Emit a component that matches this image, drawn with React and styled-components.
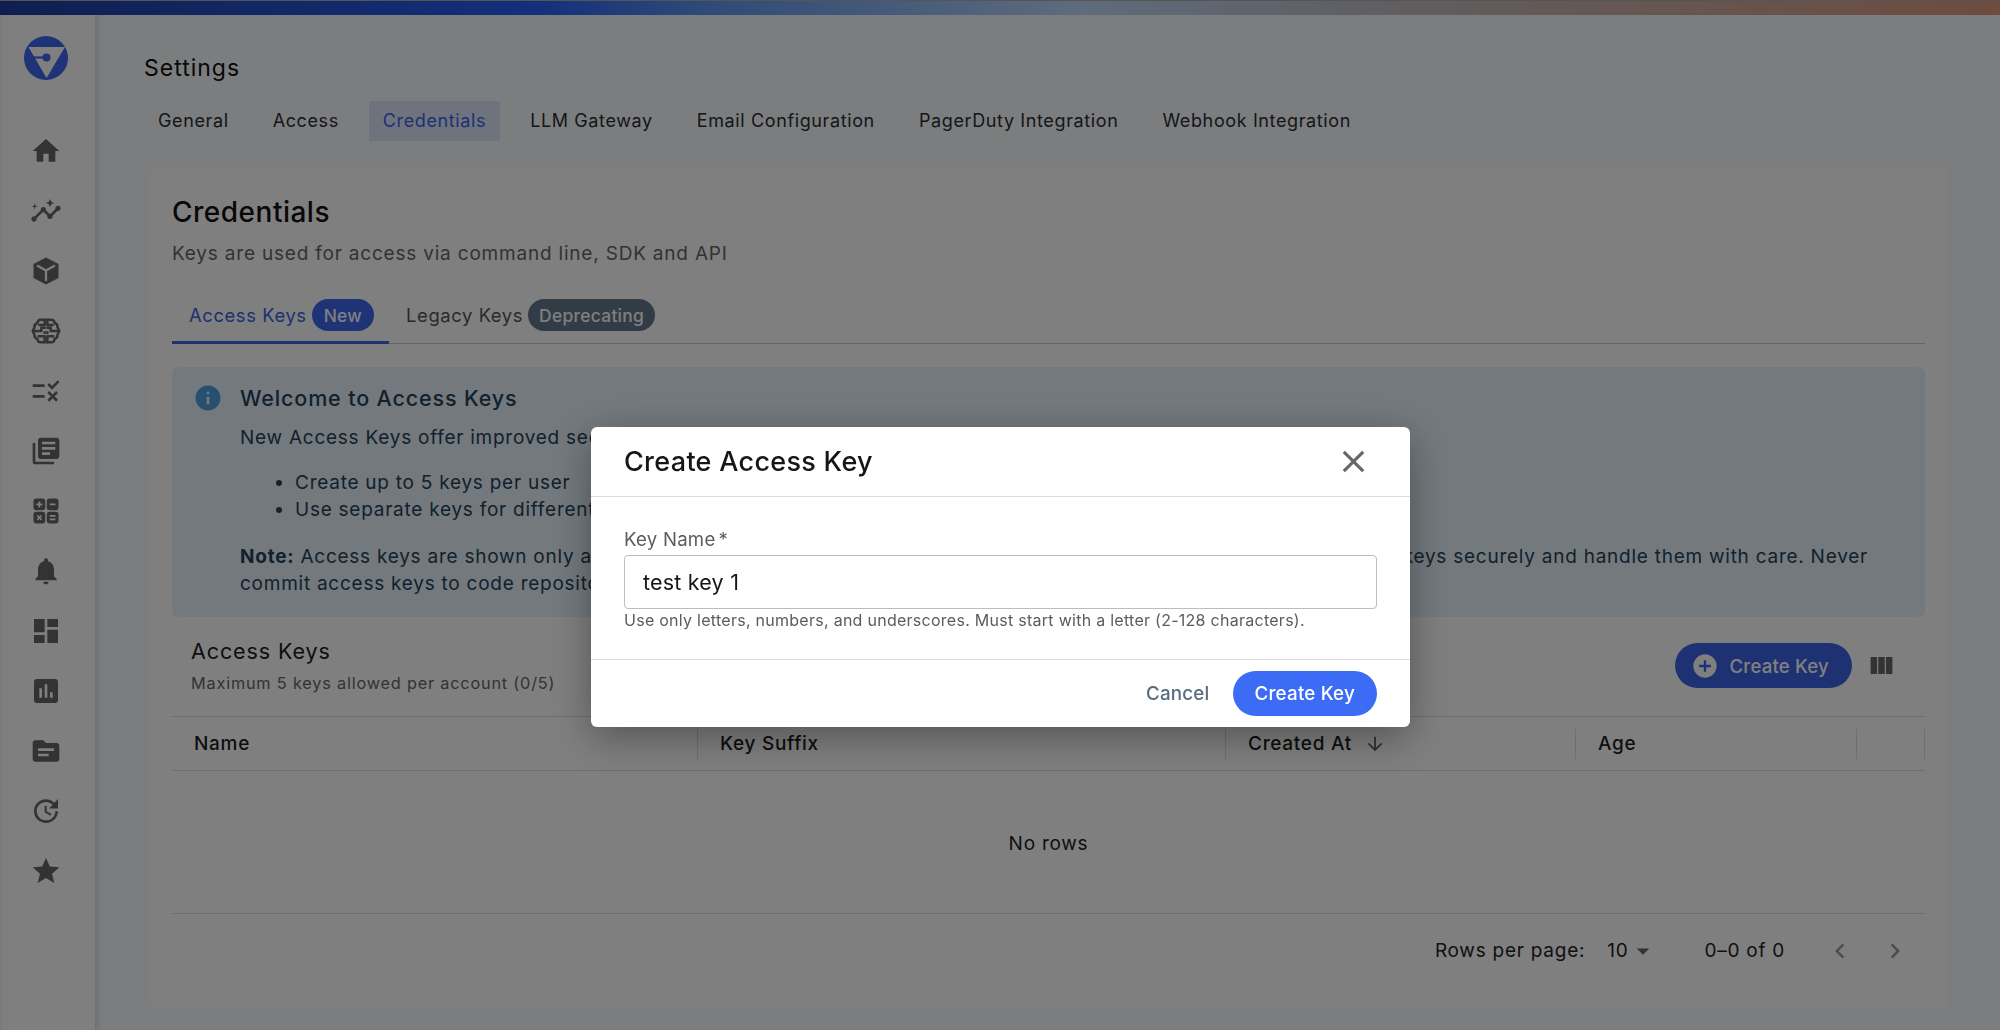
import React from "react";
import styled, { createGlobalStyle } from "styled-components";
import {
  MdHome, MdInsights, MdRule, MdLibraryBooks, MdNotifications, MdDashboard,
  MdAssessment, MdTopic, MdUpdate, MdStar, MdClose, MdInfo, MdViewColumn, MdAddCircle,
  MdArrowDropDown, MdChevronLeft, MdChevronRight, MdArrowDownward,
} from "react-icons/md";

const Global = createGlobalStyle`
  html, body { margin: 0; padding: 0; width: 2000px; height: 1030px; overflow: hidden; background: #fff; }
  * { box-sizing: border-box; }
  body { font-family: Inter, "Liberation Sans", sans-serif; color: #1a1a1a; letter-spacing: 0.5px; }
`;

const Page = styled.div`
  width: 2000px; height: 1030px; display: flex; flex-direction: column; background: #f8fafc;
`;
const TopBar = styled.div`
  height: 15px; flex: none; border-top: 1px solid #aaa;
  background: linear-gradient(90deg, #1e3ea0 0%, #2860f8 27%, #5c94f0 35%, #bcd8f8 54%, #c0bcc0 70%, #dc987c 100%);
`;
const Body = styled.div`display: flex; flex: 1; min-height: 0;`;
const Sidebar = styled.nav`
  width: 96px; flex: none; background: #fff; display: flex; flex-direction: column; align-items: center;
  padding: 21px 6px 0 0; border-right: 1px solid #e2e2e2; box-shadow: 2px 0 5px rgba(0,0,0,0.12); border-left: 2px solid #f4f4f4;
`;
const LogoWrap = styled.div`height: 85px; flex: none; width: 44px;`;
const NavItem = styled.div`
  height: 60px; flex: none; display: flex; align-items: center; justify-content: center; color: #666;
  font-size: 32px;
  svg { display: block; }
`;
const Main = styled.main`flex: 1; min-width: 0; padding: 0 50px 0 48px;`;
const PageTitle = styled.h1`
  margin: 0; font-size: 23px; font-weight: 400; line-height: 28px; padding-top: 39px; color: #111; letter-spacing: 1px;
`;
const NavTabs = styled.div`display: flex; gap: 16px; margin-top: 19px;`;
const NavTab = styled.div`
  height: 40px; padding: 0 14px 2px; display: flex; align-items: center; font-size: 18px; letter-spacing: 0.62px;
  color: ${p => (p.$active ? "#3d63e6" : "#2a2e33")};
  background: ${p => (p.$active ? "#dfe6fa" : "transparent")}; border-radius: 2px;
`;
const Card = styled.section`
  margin-top: 26px; margin-left: 6px; width: 1797px; height: 842px; background: #fff; border-radius: 8px; padding: 23px 22px 22px;
`;
const CardTitle = styled.h2`margin: 0; font-size: 28px; line-height: 44px; font-weight: 500; color: #111;`;
const CardSub = styled.p`margin: 6px 0 0; font-size: 19px; line-height: 28px; color: #666; letter-spacing: 0.8px;`;
const SubTabs = styled.div`
  display: flex; margin-top: 21px; height: 55px; border-bottom: 1px solid #ccc;
`;
const SubTab = styled.div`
  height: 55px; display: flex; align-items: center; gap: 5px; padding: 0 15px 0 17px; font-size: 18.4px; letter-spacing: 0.6px;
  color: ${p => (p.$active ? "#3d63e6" : "#555")};
  border-bottom: ${p => (p.$active ? "3px solid #3d63e6" : "none")};
  padding-bottom: ${p => (p.$active ? "0" : "3px")};
`;
const Badge = styled.span`
  height: 32px; border-radius: 16px; font-size: 17.4px; font-weight: 500; display: flex; align-items: center;
  color: #fff; background: ${p => (p.$grey ? "#64798c" : "#3f66ee")}; letter-spacing: 0.3px;
  padding: 0 ${p => (p.$grey ? "11px" : "12px")};
`;
const Alert = styled.div`
  margin-top: 23px; height: 250px; background: #e6f3fb; border-radius: 6px; padding: 18px 24px;
  display: flex; gap: 17px; color: #24425a;
`;
const InfoIcon = styled.div`flex: none; font-size: 30px; line-height: 0; color: #4fa0e0; margin-left: -3px; margin-top: -2px;`;
const AlertBody = styled.div`flex: 1; font-size: 19px; line-height: 27px; letter-spacing: 0.75px;`;
const AlertTitle = styled.div`font-size: 21.5px; line-height: 26px; font-weight: 500; margin-bottom: 13px; letter-spacing: 0.85px;`;
const AlertList = styled.ul`margin: 18px 0 20px; padding-left: 55px;`;
const SectionHead = styled.div`
  height: 100px; display: flex; align-items: center; justify-content: space-between; padding: 0 29px 2px 19px; border-bottom: 1px solid #ddd;
`;
const SectionTitle = styled.div`font-size: 21.5px; line-height: 28px; color: #1c1c1c; letter-spacing: 0.9px;`;
const SectionSub = styled.div`font-size: 16.3px; line-height: 24px; margin-top: 6px; color: #666; letter-spacing: 0.8px;`;
const SectionActions = styled.div`display: flex; align-items: center; gap: 15px;`;
const CreateButton = styled.div`
  height: 45px; padding: 0 23px 0 16px; border-radius: 23px; display: flex; align-items: center; gap: 11px; font-size: 18.6px;
  background: #3d63e6; color: #fff; font-weight: 500; letter-spacing: 0.2px;
`;
const ColumnsIcon = styled.div`font-size: 29px; line-height: 0; color: #666;`;
const HeadRow = styled.div`
  display: grid; grid-template-columns: 526px 528px 350px 281px 68px; height: 54px; border-bottom: 1px solid #ddd; align-items: center;
`;
const HeadCell = styled.div`
  height: 30px; display: flex; align-items: center; gap: 12px; padding-left: 22px; font-size: 19px; font-weight: 500; color: #1c1c1c;
  border-right: 1px solid #ddd; letter-spacing: 0.7px;
`;
const Empty = styled.div`
  height: 143px; display: flex; align-items: center; justify-content: center; padding-top: 3px; font-size: 19px; color: #1c1c1c; border-bottom: 1px solid #ddd;
  letter-spacing: 0.75px;
`;
const Pager = styled.div`
  height: 73px; display: flex; align-items: center; justify-content: flex-end; padding-right: 15px; font-size: 19px; color: #222; letter-spacing: 0.75px;
`;
const PageSize = styled.div`display: flex; align-items: center; margin-left: 22px; margin-right: 46px; svg { font-size: 30px; color: #666; }`;
const PagerArrow = styled.div`
  font-size: 30px; line-height: 0; color: #9a9a9a; margin-left: ${p => p.$gap}px;
`;
const Backdrop = styled.div`
  position: fixed; inset: 0; background: rgba(0,0,0,0.5);
`;
const Modal = styled.div`
  position: fixed; left: 591px; top: 427px; width: 819px; height: 300px; background: #fff; border-radius: 6px;
  box-shadow: 0 10px 40px rgba(0,0,0,0.35); display: flex; flex-direction: column;
`;
const ModalHead = styled.div`
  height: 70px; flex: none; border-bottom: 1px solid #dcdcdc; display: flex; align-items: center; justify-content: space-between; padding: 0 38px 0 33px;
`;
const ModalTitle = styled.div`font-size: 27px; font-weight: 500; color: #161616; letter-spacing: 0.3px;`;
const CloseBtn = styled.div`font-size: 37px; line-height: 0; color: #666;`;
const ModalBody = styled.div`flex: 1; padding: 30px 33px 0; border-bottom: 1px solid #dcdcdc;`;
const FieldLabel = styled.div`font-size: 18.6px; line-height: 24px; color: #5c5c5c; letter-spacing: 0.25px;`;
const Required = styled.span`margin-left: 3px;`;
const Input = styled.div`
  margin-top: 4px; height: 54px; border: 1px solid #bdbdbd; border-radius: 4px; display: flex; align-items: center; padding: 0 18px; font-size: 21.5px; color: #161616; letter-spacing: 0.2px;
`;
const Helper = styled.div`font-size: 16px; line-height: 20px; margin-top: 1px; color: #5c5c5c; letter-spacing: 0.27px;`;
const ModalFoot = styled.div`height: 67px; flex: none; display: flex; align-items: center; justify-content: flex-end; padding: 0 33px; gap: 23px;`;
const CancelBtn = styled.div`font-size: 18.8px; font-weight: 500; color: #5a6b80; letter-spacing: 0.2px;`;
const SubmitBtn = styled.div`
  height: 45px; padding: 0 22px; border-radius: 23px; background: #3c6cf5; color: #fff; display: flex; align-items: center; font-size: 18.8px; font-weight: 500; letter-spacing: 0.2px;
`;

const Logo = () => (
  <svg width="44" height="44" viewBox="0 0 44 44">
    <circle cx="22" cy="22" r="22" fill="#3f66ee" />
    <path d="M4.5 11 H41 L22.5 42 Z" fill="#fff" />
    <path d="M10 21.5 H21" stroke="#3f66ee" strokeWidth="2.2" fill="none" />
    <circle cx="22.5" cy="21.5" r="4" fill="#3f66ee" />
  </svg>
);
const CubeIcon = () => (
  <svg width="30" height="30" viewBox="0 0 30 30">
    <path d="M15 1.5 L27.5 8 V22 L15 28.5 L2.5 22 V8 Z" fill="currentColor" />
    <path d="M6 9.5 L15 14.5 L24 9.5 M15 14.5 V25" stroke="#fff" strokeWidth="2.2" fill="none" />
  </svg>
);
const BrainIcon = () => (
  <svg width="32" height="32" viewBox="0 0 24 24" fill="none" stroke="currentColor" strokeWidth="1.9" strokeLinejoin="round" strokeLinecap="round">
    <path d="M11 3.5 H8 Q5.8 3.5 5.6 6 Q3 6.8 3.4 9.2 L2 12 L3.4 14.8 Q3 17.2 5.6 18 Q5.8 20.5 8 20.5 H11" />
    <path d="M13 3.5 H16 Q18.2 3.5 18.4 6 Q21 6.8 20.6 9.2 L22 12 L20.6 14.8 Q21 17.2 18.4 18 Q18.2 20.5 16 20.5 H13" />
    <path d="M11 3.5 V7.5 H7 M3 12 H8.5 V9.5 H11 M6.5 16 H11 V20.5" />
    <path d="M13 3.5 V7.5 H17 M21 12 H15.5 V9.5 H13 M17.5 16 H13 V20.5" />
    <path d="M11 13 V13.5 M13 13 V13.5" />
  </svg>
);
const CalcIcon = () => (
  <svg width="30" height="30" viewBox="0 0 24 24">
    <g fill="currentColor">
      <rect x="2" y="2" width="9.4" height="9.4" rx="2.2" />
      <rect x="12.6" y="2" width="9.4" height="9.4" rx="2.2" />
      <rect x="2" y="12.6" width="9.4" height="9.4" rx="2.2" />
      <rect x="12.6" y="12.6" width="9.4" height="9.4" rx="2.2" />
    </g>
    <path d="M6.7 4.3 V9.1 M4.3 6.7 H9.1 M15 6.7 H19.6 M5 15.6 L8.4 19 M8.4 15.6 L5 19 M15 15.9 H19.6 M15 18.7 H19.6" stroke="#fff" strokeWidth="1.4" fill="none" />
  </svg>
);

const nav = [
  <MdHome />, <MdInsights />, <CubeIcon />, <BrainIcon />, <MdRule />, <MdLibraryBooks />, <CalcIcon />,
  <MdNotifications />, <MdDashboard />, <MdAssessment />, <MdTopic />, <MdUpdate />, <MdStar />,
];
const tabs = ["General", "Access", "Credentials", "LLM Gateway", "Email Configuration", "PagerDuty Integration", "Webhook Integration"];

export default function App() {
  return (
    <Page>
      <Global />
      <TopBar />
      <Body>
        <Sidebar>
          <LogoWrap><Logo /></LogoWrap>
          {nav.map((icon, i) => <NavItem key={i}>{icon}</NavItem>)}
        </Sidebar>
        <Main>
          <PageTitle>Settings</PageTitle>
          <NavTabs>
            {tabs.map(t => <NavTab key={t} $active={t === "Credentials"}>{t}</NavTab>)}
          </NavTabs>
          <Card>
            <CardTitle>Credentials</CardTitle>
            <CardSub>Keys are used for access via command line, SDK and API</CardSub>
            <SubTabs>
              <SubTab $active>Access Keys <Badge>New</Badge></SubTab>
              <SubTab>Legacy Keys <Badge $grey>Deprecating</Badge></SubTab>
            </SubTabs>
            <Alert>
              <InfoIcon><MdInfo /></InfoIcon>
              <AlertBody>
                <AlertTitle>Welcome to Access Keys</AlertTitle>
                <div>New Access Keys offer improved security and flexibility over legacy keys.</div>
                <AlertList>
                  <li>Create up to 5 keys per user</li>
                  <li>Use separate keys for different applications</li>
                </AlertList>
                <div><strong>Note:</strong> Access keys are shown only at the time of creation and cannot be retrieved afterwards. Please store your access keys securely and handle them with care. Never commit access keys to code repositories or share them.</div>
              </AlertBody>
            </Alert>
            <SectionHead>
              <div>
                <SectionTitle>Access Keys</SectionTitle>
                <SectionSub>Maximum 5 keys allowed per account (0/5)</SectionSub>
              </div>
              <SectionActions>
                <CreateButton><MdAddCircle size={28} />Create Key</CreateButton>
                <ColumnsIcon><MdViewColumn /></ColumnsIcon>
              </SectionActions>
            </SectionHead>
            <HeadRow>
              <HeadCell>Name</HeadCell>
              <HeadCell>Key Suffix</HeadCell>
              <HeadCell>Created At <MdArrowDownward size={22} color="#666" /></HeadCell>
              <HeadCell>Age</HeadCell>
              <HeadCell />
            </HeadRow>
            <Empty>No rows</Empty>
            <Pager>
              Rows per page:
              <PageSize>10<MdArrowDropDown /></PageSize>
              0–0 of 0
              <PagerArrow $gap={40}><MdChevronLeft /></PagerArrow>
              <PagerArrow $gap={25}><MdChevronRight /></PagerArrow>
            </Pager>
          </Card>
        </Main>
      </Body>
      <Backdrop />
      <Modal>
        <ModalHead>
          <ModalTitle>Create Access Key</ModalTitle>
          <CloseBtn><MdClose /></CloseBtn>
        </ModalHead>
        <ModalBody>
          <FieldLabel>Key Name<Required>*</Required></FieldLabel>
          <Input>test key 1</Input>
          <Helper>Use only letters, numbers, and underscores. Must start with a letter (2-128 characters).</Helper>
        </ModalBody>
        <ModalFoot>
          <CancelBtn>Cancel</CancelBtn>
          <SubmitBtn>Create Key</SubmitBtn>
        </ModalFoot>
      </Modal>
    </Page>
  );
}
